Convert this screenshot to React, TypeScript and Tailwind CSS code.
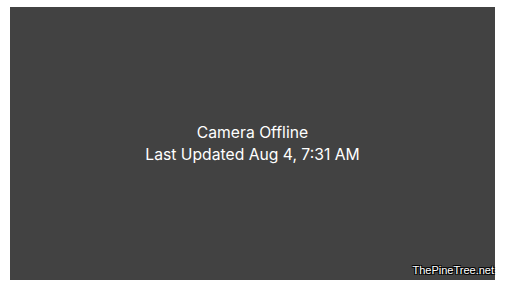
import React from "react";

const App: React.FC = () => {
  return (
    <div className="h-[288px] w-[513px] bg-white pl-[10px] pt-[7px]">
      <div className="relative flex h-[273px] w-[485px] flex-col items-center justify-center bg-[#424242] font-['Inter',sans-serif] text-[15.7px] leading-[22px] text-white">
        <p>Camera Offline</p>
        <p>Last Updated Aug 4, 7:31 AM</p>
        <span className="absolute bottom-[4px] right-[1px] font-['Liberation_Sans',sans-serif] text-[11px] leading-none text-white [text-shadow:-1px_-1px_0_#000,1px_-1px_0_#000,-1px_1px_0_#000,1px_1px_0_#000]">
          ThePineTree.net
        </span>
      </div>
    </div>
  );
};

export default App;
